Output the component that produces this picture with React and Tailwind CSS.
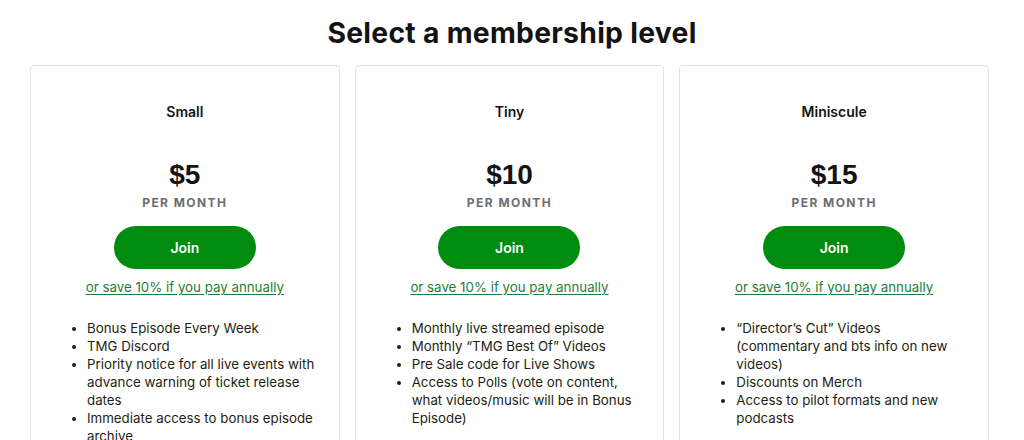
const TIERS = [
  {
    name: 'Small',
    price: '$5',
    perks: [
      'Bonus Episode Every Week',
      'TMG Discord',
      'Priority notice for all live events with advance warning of ticket release dates',
      'Immediate access to bonus episode archive',
    ],
  },
  {
    name: 'Tiny',
    price: '$10',
    perks: [
      'Monthly live streamed episode',
      'Monthly \u201cTMG Best Of\u201d Videos',
      'Pre Sale code for Live Shows',
      'Access to Polls (vote on content, what videos/music will be in Bonus Episode)',
    ],
  },
  {
    name: 'Miniscule',
    price: '$15',
    perks: [
      '\u201cDirector\u2019s Cut\u201d Videos (commentary and bts info on new videos)',
      'Discounts on Merch',
      'Access to pilot formats and new podcasts',
    ],
  },
];

function TierCard({ tier }) {
  return (
    <div className="flex flex-col items-center border border-[#e5e3dd] rounded-[4px] bg-white px-6 pt-[37px] pb-8">
      <h3 className="text-[14px] leading-[18px] font-semibold text-[#131313]">{tier.name}</h3>

      <p className="mt-[38px] text-[28px] leading-[32px] font-bold text-[#131313] font-['Liberation_Sans',Arial,sans-serif]">
        {tier.price}
      </p>
      <p className="mt-[5px] text-[12px] leading-[14px] font-bold tracking-[0.12em] text-[#6e6e6e]">PER MONTH</p>

      <button className="mt-[16px] w-[142px] h-[43px] rounded-full bg-[#008c0f] text-white text-[14px] font-semibold">
        Join
      </button>

      <a href="#" className="mt-[9px] text-[13.3px] leading-[18px] text-[#1a7f3a] underline underline-offset-2">
        or save 10% if you pay annually
      </a>

      <ul className="self-stretch mt-[23px] pl-8 list-disc text-[13.3px] leading-[18px] text-[#241e12]">
        {tier.perks.map((p) => (
          <li key={p}>{p}</li>
        ))}
      </ul>
    </div>
  );
}

export default function App() {
  return (
    <div className="w-[1024px] h-[440px] overflow-hidden bg-white font-['Inter',sans-serif]">
      <h1 className="pt-[16px] text-center text-[28.3px] leading-[34px] font-bold tracking-[0.01em] text-[#131313]">
        Select a membership level
      </h1>
      <div className="mt-[15px] ml-[30px] w-[959px] grid grid-cols-3 gap-[15px] items-start">
        {TIERS.map((t) => (
          <TierCard key={t.name} tier={t} />
        ))}
      </div>
    </div>
  );
}
